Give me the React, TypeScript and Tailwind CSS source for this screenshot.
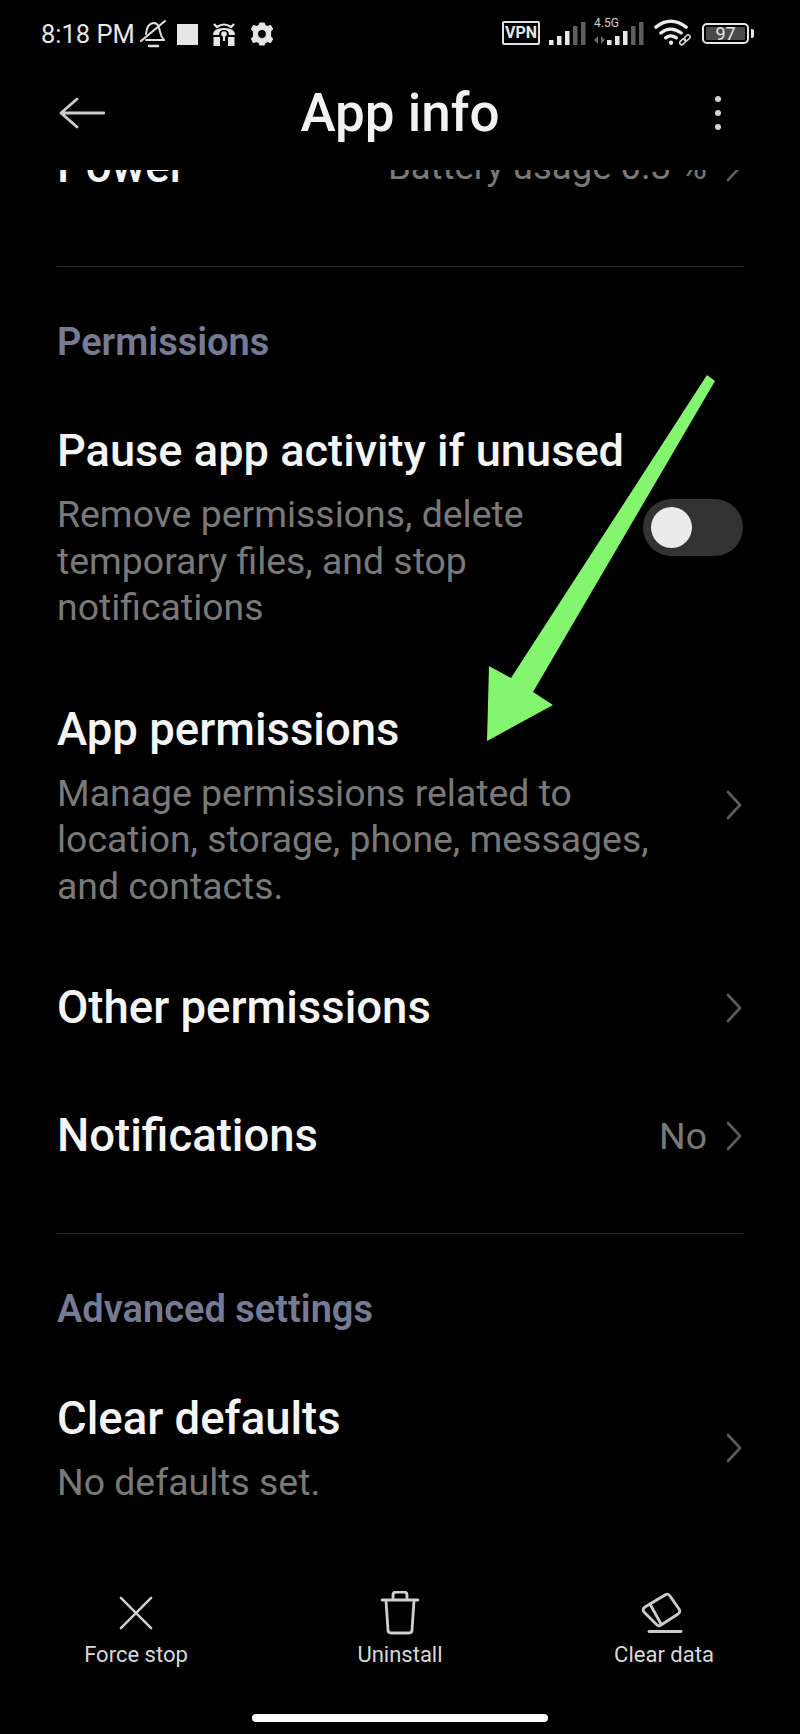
const Chevron = ({ className = "" }: { className?: string }) => (
  <svg viewBox="0 0 18 30" className={`w-[18px] h-[30px] shrink-0 ${className}`} fill="none" stroke="#5c5c5c" strokeWidth="2.6" strokeLinecap="round" strokeLinejoin="round">
    <path d="M3 2 L15 15 L3 28" />
  </svg>
);

const Row = ({ title, sub, right, chevron = true, className = "", titleClass = "text-[45.5px]" }: { title: string; sub?: string[]; right?: string; chevron?: boolean; className?: string; titleClass?: string }) => (
  <div className={`flex items-center justify-between ${className}`}>
    <div className="flex flex-col">
      <div className={`${titleClass} leading-[56px] font-medium text-[#f5f5f5]`}>{title}</div>
      {sub && (
        <div className="mt-[12px] text-[37.4px] leading-[46.5px] text-[#797979]">
          {sub.map((s) => (
            <div key={s}>{s}</div>
          ))}
        </div>
      )}
    </div>
    <div className="flex items-center gap-[18px]">
      {right && <span className="text-[37.4px] text-[#797979]">{right}</span>}
      {chevron && <Chevron />}
    </div>
  </div>
);

const Section = ({ children, className = "" }: { children: string; className?: string }) => (
  <div className={`text-[38px] leading-[44px] font-semibold text-[#757b95] ${className}`}>{children}</div>
);

const Bars = ({ className = "" }: { className?: string }) => (
  <svg viewBox="0 0 37 24" className={`w-[37px] h-[24px] ${className}`}>
    <rect x="0" y="18" width="4.5" height="5" fill="#e8e8e8" />
    <rect x="8" y="14" width="4.5" height="9" fill="#e8e8e8" />
    <rect x="16" y="9" width="4.5" height="14" fill="#e8e8e8" />
    <rect x="24" y="4" width="4.5" height="19" fill="#5e5e5e" />
    <rect x="32" y="0" width="4.5" height="23" fill="#5e5e5e" />
  </svg>
);

const StatusBar = () => (
  <div className="h-[59px] pt-[19px] pl-[41px] pr-[46px] flex items-start justify-between text-[#e6e6e6]">
    <div className="flex items-center h-[30px]">
      <span className="text-[25.5px] leading-[30px] mr-[5px]">8:18 PM</span>
      <svg viewBox="0 0 26 30" className="w-[26px] h-[30px]" fill="none" stroke="#e0e0e0" strokeWidth="2" strokeLinecap="round" strokeLinejoin="round">
        <path d="M6 15 Q7 5 13 4 Q18 4 19 9 L21 16 Q22 19 24 21 H6" />
        <path d="M1 22 L25 2" />
        <path d="M9 27 H18" strokeWidth="2.4" />
      </svg>
      <div className="w-[21px] h-[21px] bg-[#e6e6e6] ml-[11px]" />
      <svg viewBox="0 0 24 24" className="w-[24px] h-[24px] ml-[14px]" fill="#e6e6e6">
        <path d="M2 2 L5 5 Q12 0 19 5 L22 2" fill="none" stroke="#e6e6e6" strokeWidth="2.2" />
        <path d="M1 13 Q1 6 12 6 Q23 6 23 13 H17 Q17 8 12 8 Q7 8 7 13 Z" />
        <circle cx="12" cy="12" r="2.8" />
        <rect x="11" y="13" width="2" height="6" />
        <rect x="1.5" y="15" width="6.5" height="9" />
        <rect x="16" y="15" width="6.5" height="9" />
      </svg>
      <svg viewBox="0 0 24 24" className="w-[24px] h-[24px] ml-[14px]" fill="#e6e6e6" stroke="#e6e6e6" strokeWidth="1.2" strokeLinejoin="round">
        <path fillRule="evenodd" d="M10 1 H14 L15 3.5 L17.5 4.5 L20.5 3.5 L22.5 7 L20.5 9 V15 L22.5 17 L20.5 20.5 L17.5 19.5 L15 20.5 L14 23 H10 L9 20.5 L6.5 19.5 L3.5 20.5 L1.5 17 L3.5 15 V9 L1.5 7 L3.5 3.5 L6.5 4.5 L9 3.5 Z M12 7.5 A4.5 4.5 0 1 0 12 16.5 A4.5 4.5 0 1 0 12 7.5 Z" />
      </svg>
    </div>
    <div className="flex items-center h-[30px] mt-[-1px]">
      <div className="w-[38px] h-[24px] border-[2.5px] border-[#e0e0e0] rounded-[2px] text-[16px] leading-[19px] font-bold text-center text-[#e6e6e6]">VPN</div>
      <Bars className="ml-[9px] mt-[2px]" />
      <div className="relative w-[50px] h-[30px] ml-[8px]">
        <span className="absolute left-0 top-[-2px] text-[12px] leading-[14px] text-[#cfcfcf]">4.5G</span>
        <Bars className="absolute right-0 top-[4px]" />
        <svg viewBox="0 0 12 8" className="absolute left-0 top-[18px] w-[12px] h-[8px]" fill="#6a6a6a">
          <path d="M0 4 L4 0 V8 Z M7 0 L7 8 L11 4 Z" />
        </svg>
      </div>
      <svg viewBox="0 0 38 28" className="w-[37px] h-[28px] ml-[10px]" fill="none" stroke="#ececec" strokeWidth="3.4" strokeLinecap="round">
        <path d="M2 8 Q17 -4 33 8" />
        <path d="M7 14 Q17 6 28 14" />
        <path d="M12 19 Q17 15 23 19" />
        <circle cx="17.5" cy="24" r="2.2" fill="#ececec" stroke="none" />
        <g strokeWidth="1.6" stroke="#d8d8d8">
          <rect x="26" y="21" width="7" height="4" rx="2" transform="rotate(-45 29.5 23)" />
          <rect x="30.5" y="17" width="7" height="4" rx="2" transform="rotate(-45 34 19)" />
        </g>
      </svg>
      <div className="ml-[11px] w-[47px] h-[21px] border-[2.5px] border-[#e6e6e6] rounded-[5px] p-[2px] flex">
        <div className="flex-1 bg-[#4a4a4a] rounded-[1px] text-[18px] leading-[13px] text-center text-[#e6e6e6]">97</div>
      </div>
      <div className="w-[3px] h-[9px] ml-[2px] bg-[#e6e6e6] rounded-r-[2px]" />
    </div>
  </div>
);

const Header = () => (
  <div className="h-[111px] pb-[3px] px-[59px] grid grid-cols-[1fr_auto_1fr] items-center">
    <svg viewBox="0 0 46 32" className="w-[46px] h-[32px]" fill="none" stroke="#cccccc" strokeWidth="2.8" strokeLinecap="round" strokeLinejoin="round">
      <path d="M45 16 H2 M18 2 L2 16 L18 30" />
    </svg>
    <div className="text-[53px] leading-[60px] font-medium text-[#f2f2f2]">App info</div>
    <div className="flex flex-col gap-[8px] items-end pr-[20px]">
      <div className="w-[6px] h-[6px] rounded-full bg-[#d4d4d4]" />
      <div className="w-[6px] h-[6px] rounded-full bg-[#d4d4d4]" />
      <div className="w-[6px] h-[6px] rounded-full bg-[#d4d4d4]" />
    </div>
  </div>
);

const Action = ({ label, children }: { label: string; children: React.ReactNode }) => (
  <div className="flex flex-col items-center w-[200px]">
    <div className="h-[46px] flex items-center justify-center">{children}</div>
    <div className="mt-[5px] text-[22px] leading-[28px] text-[#d8d8d8]">{label}</div>
  </div>
);

export default function App() {
  return (
    <div className="relative w-[800px] h-[1734px] bg-black overflow-hidden flex flex-col font-['Roboto',sans-serif]">
      <StatusBar />
      <Header />
      <main className="flex-1 overflow-hidden px-[57px] min-h-0">
        <div className="mt-[-33px] flex items-center justify-between h-[60px]">
          <div className="text-[45.5px] leading-[56px] font-medium text-[#f5f5f5]">Power</div>
          <div className="flex items-center gap-[18px]">
            <span className="text-[36.5px] text-[#797979]">Battery usage 0.3 %</span>
            <Chevron />
          </div>
        </div>
        <div className="mt-[69px] h-px bg-[#2c2c2c]" />
        <Section className="mt-[53px]">Permissions</Section>
        <div className="relative mt-[59px]">
          <Row title="Pause app activity if unused" titleClass="text-[45.2px]" sub={["Remove permissions, delete", "temporary files, and stop", "notifications"]} chevron={false} />
          <div className="absolute right-0 top-[76px] w-[100px] h-[57px] rounded-full bg-[#333333] flex items-center pl-[8px]">
            <div className="w-[41px] h-[41px] rounded-full bg-[#ebebeb]" />
          </div>
        </div>
        <Row className="mt-[71px]" title="App permissions" sub={["Manage permissions related to", "location, storage, phone, messages,", "and contacts."]} />
        <Row className="mt-[71px]" title="Other permissions" />
        <Row className="mt-[72px]" title="Notifications" right="No" />
        <div className="mt-[69px] h-px bg-[#2c2c2c]" />
        <Section className="mt-[53px]">Advanced settings</Section>
        <Row className="mt-[60px]" title="Clear defaults" sub={["No defaults set."]} />
      </main>
      <div className="h-[144px] px-[36px] flex justify-between shrink-0">
        <Action label="Force stop">
          <svg viewBox="0 0 36 36" className="w-[34px] h-[34px]" fill="none" stroke="#d0d0d0" strokeWidth="2.6" strokeLinecap="round"><path d="M2 2 L34 34 M34 2 L2 34" /></svg>
        </Action>
        <Action label="Uninstall">
          <svg viewBox="0 0 38 44" className="w-[38px] h-[44px]" fill="none" stroke="#d0d0d0" strokeWidth="2.8" strokeLinecap="round" strokeLinejoin="round">
            <path d="M1 9 H37" /><path d="M12 8 V4 Q12 1 15 1 H23 Q26 1 26 4 V8" /><path d="M5 10 L7 39 Q7 42 10 42 H28 Q31 42 31 39 L33 10" />
          </svg>
        </Action>
        <Action label="Clear data">
          <svg viewBox="0 0 42 42" className="w-[42px] h-[42px] -ml-[4px]" fill="none" stroke="#cccccc" strokeWidth="2.8" strokeLinecap="round" strokeLinejoin="round">
            <path d="M4 15 L24 3 Q27 1 29 4 L38 17 Q40 20 37 22 L20 33 Q17 35 15 32 L3 20 Q1 17 4 15 Z" /><path d="M9 12 L20 32" /><path d="M8 39.5 H40" />
          </svg>
        </Action>
      </div>
      <div className="absolute left-[252px] top-[1714px] w-[296px] h-[8px] rounded-full bg-white" />
      <svg viewBox="0 0 800 1734" className="absolute inset-0 w-[800px] h-[1734px] pointer-events-none">
        <polygon points="707,375 715,381 533,692 553,705 487,741 489,666 511,678" fill="#83f56f" />
      </svg>
    </div>
  );
}
